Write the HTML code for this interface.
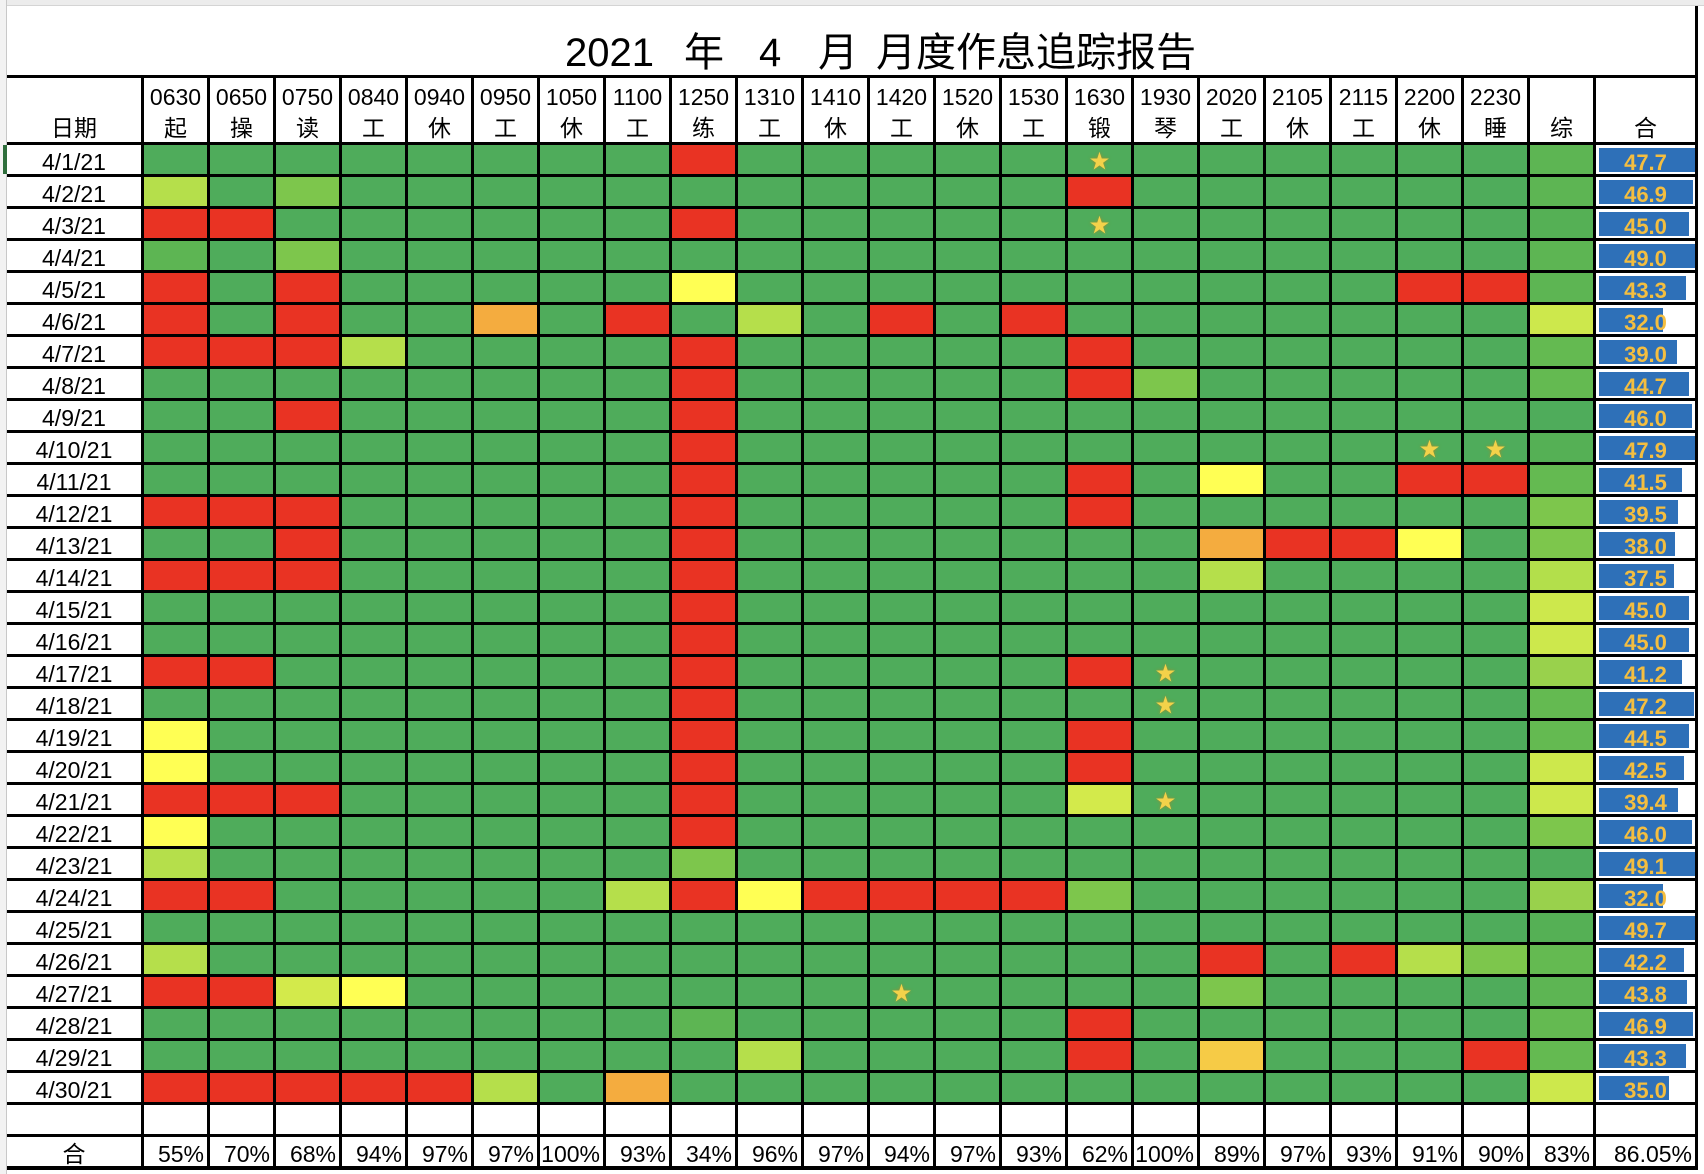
<!DOCTYPE html>
<html><head><meta charset="utf-8">
<style>
*{margin:0;padding:0;box-sizing:border-box}
html,body{width:1704px;height:1174px;overflow:hidden;background:#fff;font-family:"Liberation Sans","Noto Sans CJK SC",sans-serif;color:#000}
.topstrip{position:absolute;left:0;top:0;width:1704px;height:6px;background:#ececec;border-bottom:1px solid #d4d4d4}
.leftstrip{position:absolute;left:0;top:0;width:7px;height:1174px;background:#f2f2f2;border-right:1px solid #c8c8c8}
.sel{position:absolute;left:3px;top:145px;width:4px;height:29px;background:#2f6e3c}
.rb{position:absolute;left:1695px;top:6px;width:3px;height:72px;background:#000}
.ti{position:absolute;top:30px;font-size:40px;line-height:46px;white-space:nowrap;font-family:"Liberation Sans","Noto Sans CJK SC",sans-serif}
.t{position:absolute;left:7px;top:75px;display:grid;background:#000;padding:3px 3px 4px 0;gap:3px;
grid-template-columns:134px repeat(22,63px) 99px;grid-template-rows:64px repeat(32,29px)}
.t>div,.t>i,.t>b{display:block;font-style:normal;font-weight:normal;overflow:hidden}
.t>div{background:#fff;font-size:23px;text-align:center;line-height:35px}
.t>div.h{line-height:31px;padding-top:4px;font-size:23px}
.t>div.hd{line-height:31px;padding-top:35px;font-size:23px}
.t>div.p{text-align:right;padding-right:3px;font-size:23px;line-height:35px}
.t>i{background:#4FAC5B;text-align:center;color:#F3D24A;font-size:20px;line-height:34px;text-shadow:0 0 3px #a88a2a}
.r{background:#E93323!important}.y{background:#FFFF54!important}.l{background:#B5DF4B!important}
.m{background:#7DC64C!important}.o{background:#F4AC3F!important}.go{background:#F6CB46!important}
.ly{background:#D3EA4B!important}.m2{background:#5DB553!important}
.z1{background:#5DB553!important}.z2{background:#55B055!important}.z3{background:#CDE84C!important}
.z4{background:#64BA51!important}.z5{background:#7DC64C!important}.z6{background:#B3DF4B!important}
.z7{background:#99D14C!important}.z8{background:#4FAC5B!important}
.t>b{background:#fff;position:relative}
.t>b s{position:absolute;left:3px;top:3px;height:24px;background:#2E70B8;text-decoration:none}
.t>b u{position:absolute;left:0;right:0;top:0;text-align:center;text-decoration:none;color:#F4BE40;font-weight:bold;font-size:22px;line-height:36px}
</style></head><body>
<div class="topstrip"></div>
<div class="leftstrip"></div>
<div class="sel"></div>
<div class="rb"></div>
<div class="ti" style="left:565px">2021</div>
<div class="ti" style="left:684px">年</div>
<div class="ti" style="left:759px">4</div>
<div class="ti" style="left:818px">月</div>
<div class="ti" style="left:876px">月度作息追踪报告</div>
<div class="t">
<div class="hd">日期</div><div class="h">0630<br>起</div><div class="h">0650<br>操</div><div class="h">0750<br>读</div><div class="h">0840<br>工</div><div class="h">0940<br>休</div><div class="h">0950<br>工</div><div class="h">1050<br>休</div><div class="h">1100<br>工</div><div class="h">1250<br>练</div><div class="h">1310<br>工</div><div class="h">1410<br>休</div><div class="h">1420<br>工</div><div class="h">1520<br>休</div><div class="h">1530<br>工</div><div class="h">1630<br>锻</div><div class="h">1930<br>琴</div><div class="h">2020<br>工</div><div class="h">2105<br>休</div><div class="h">2115<br>工</div><div class="h">2200<br>休</div><div class="h">2230<br>睡</div><div class="hd">综</div><div class="hd">合</div>

<div>4/1/21</div><i></i><i></i><i></i><i></i><i></i><i></i><i></i><i></i><i class=r></i><i></i><i></i><i></i><i></i><i></i><i>★</i><i></i><i></i><i></i><i></i><i></i><i></i><i class=z1></i><b><s style="width:96px"></s><u>47.7</u></b>
<div>4/2/21</div><i class=l></i><i></i><i class=m></i><i></i><i></i><i></i><i></i><i></i><i></i><i></i><i></i><i></i><i></i><i></i><i class=r></i><i></i><i></i><i></i><i></i><i></i><i></i><i class=z1></i><b><s style="width:94px"></s><u>46.9</u></b>
<div>4/3/21</div><i class=r></i><i class=r></i><i></i><i></i><i></i><i></i><i></i><i></i><i class=r></i><i></i><i></i><i></i><i></i><i></i><i>★</i><i></i><i></i><i></i><i></i><i></i><i></i><i class=z2></i><b><s style="width:90px"></s><u>45.0</u></b>
<div>4/4/21</div><i class=m2></i><i></i><i class=m></i><i></i><i></i><i></i><i></i><i></i><i></i><i></i><i></i><i></i><i></i><i></i><i></i><i></i><i></i><i></i><i></i><i></i><i></i><i class=z1></i><b><s style="width:99px"></s><u>49.0</u></b>
<div>4/5/21</div><i class=r></i><i></i><i class=r></i><i></i><i></i><i></i><i></i><i></i><i class=y></i><i></i><i></i><i></i><i></i><i></i><i></i><i></i><i></i><i></i><i></i><i class=r></i><i class=r></i><i class=z1></i><b><s style="width:87px"></s><u>43.3</u></b>
<div>4/6/21</div><i class=r></i><i></i><i class=r></i><i></i><i></i><i class=o></i><i></i><i class=r></i><i></i><i class=l></i><i></i><i class=r></i><i></i><i class=r></i><i></i><i></i><i></i><i></i><i></i><i></i><i></i><i class=z3></i><b><s style="width:64px"></s><u>32.0</u></b>
<div>4/7/21</div><i class=r></i><i class=r></i><i class=r></i><i class=l></i><i></i><i></i><i></i><i></i><i class=r></i><i></i><i></i><i></i><i></i><i></i><i class=r></i><i></i><i></i><i></i><i></i><i></i><i></i><i class=z4></i><b><s style="width:78px"></s><u>39.0</u></b>
<div>4/8/21</div><i></i><i></i><i></i><i></i><i></i><i></i><i></i><i></i><i class=r></i><i></i><i></i><i></i><i></i><i></i><i class=r></i><i class=m></i><i></i><i></i><i></i><i></i><i></i><i class=z4></i><b><s style="width:90px"></s><u>44.7</u></b>
<div>4/9/21</div><i></i><i></i><i class=r></i><i></i><i></i><i></i><i></i><i></i><i class=r></i><i></i><i></i><i></i><i></i><i></i><i></i><i></i><i></i><i></i><i></i><i></i><i></i><i class=z8></i><b><s style="width:93px"></s><u>46.0</u></b>
<div>4/10/21</div><i></i><i></i><i></i><i></i><i></i><i></i><i></i><i></i><i class=r></i><i></i><i></i><i></i><i></i><i></i><i></i><i></i><i></i><i></i><i></i><i>★</i><i>★</i><i class=z2></i><b><s style="width:96px"></s><u>47.9</u></b>
<div>4/11/21</div><i></i><i></i><i></i><i></i><i></i><i></i><i></i><i></i><i class=r></i><i></i><i></i><i></i><i></i><i></i><i class=r></i><i></i><i class=y></i><i></i><i></i><i class=r></i><i class=r></i><i class=z4></i><b><s style="width:83px"></s><u>41.5</u></b>
<div>4/12/21</div><i class=r></i><i class=r></i><i class=r></i><i></i><i></i><i></i><i></i><i></i><i class=r></i><i></i><i></i><i></i><i></i><i></i><i class=r></i><i></i><i></i><i></i><i></i><i></i><i></i><i class=z5></i><b><s style="width:79px"></s><u>39.5</u></b>
<div>4/13/21</div><i></i><i></i><i class=r></i><i></i><i></i><i></i><i></i><i></i><i class=r></i><i></i><i></i><i></i><i></i><i></i><i></i><i></i><i class=o></i><i class=r></i><i class=r></i><i class=y></i><i></i><i class=z5></i><b><s style="width:76px"></s><u>38.0</u></b>
<div>4/14/21</div><i class=r></i><i class=r></i><i class=r></i><i></i><i></i><i></i><i></i><i></i><i class=r></i><i></i><i></i><i></i><i></i><i></i><i></i><i></i><i class=l></i><i></i><i></i><i></i><i></i><i class=z6></i><b><s style="width:75px"></s><u>37.5</u></b>
<div>4/15/21</div><i></i><i></i><i></i><i></i><i></i><i></i><i></i><i></i><i class=r></i><i></i><i></i><i></i><i></i><i></i><i></i><i></i><i></i><i></i><i></i><i></i><i></i><i class=z3></i><b><s style="width:90px"></s><u>45.0</u></b>
<div>4/16/21</div><i></i><i></i><i></i><i></i><i></i><i></i><i></i><i></i><i class=r></i><i></i><i></i><i></i><i></i><i></i><i></i><i></i><i></i><i></i><i></i><i></i><i></i><i class=z3></i><b><s style="width:90px"></s><u>45.0</u></b>
<div>4/17/21</div><i class=r></i><i class=r></i><i></i><i></i><i></i><i></i><i></i><i></i><i class=r></i><i></i><i></i><i></i><i></i><i></i><i class=r></i><i>★</i><i></i><i></i><i></i><i></i><i></i><i class=z7></i><b><s style="width:83px"></s><u>41.2</u></b>
<div>4/18/21</div><i></i><i></i><i></i><i></i><i></i><i></i><i></i><i></i><i class=r></i><i></i><i></i><i></i><i></i><i></i><i></i><i>★</i><i></i><i></i><i></i><i></i><i></i><i class=z4></i><b><s style="width:95px"></s><u>47.2</u></b>
<div>4/19/21</div><i class=y></i><i></i><i></i><i></i><i></i><i></i><i></i><i></i><i class=r></i><i></i><i></i><i></i><i></i><i></i><i class=r></i><i></i><i></i><i></i><i></i><i></i><i></i><i class=z4></i><b><s style="width:90px"></s><u>44.5</u></b>
<div>4/20/21</div><i class=y></i><i></i><i></i><i></i><i></i><i></i><i></i><i></i><i class=r></i><i></i><i></i><i></i><i></i><i></i><i class=r></i><i></i><i></i><i></i><i></i><i></i><i></i><i class=z3></i><b><s style="width:85px"></s><u>42.5</u></b>
<div>4/21/21</div><i class=r></i><i class=r></i><i class=r></i><i></i><i></i><i></i><i></i><i></i><i class=r></i><i></i><i></i><i></i><i></i><i></i><i class=ly></i><i>★</i><i></i><i></i><i></i><i></i><i></i><i class=z3></i><b><s style="width:79px"></s><u>39.4</u></b>
<div>4/22/21</div><i class=y></i><i></i><i></i><i></i><i></i><i></i><i></i><i></i><i class=r></i><i></i><i></i><i></i><i></i><i></i><i></i><i></i><i></i><i></i><i></i><i></i><i></i><i class=z5></i><b><s style="width:93px"></s><u>46.0</u></b>
<div>4/23/21</div><i class=l></i><i></i><i></i><i></i><i></i><i></i><i></i><i></i><i class=m></i><i></i><i></i><i></i><i></i><i></i><i></i><i></i><i></i><i></i><i></i><i></i><i></i><i class=z8></i><b><s style="width:99px"></s><u>49.1</u></b>
<div>4/24/21</div><i class=r></i><i class=r></i><i></i><i></i><i></i><i></i><i></i><i class=l></i><i class=r></i><i class=y></i><i class=r></i><i class=r></i><i class=r></i><i class=r></i><i class=m></i><i></i><i></i><i></i><i></i><i></i><i></i><i class=z7></i><b><s style="width:64px"></s><u>32.0</u></b>
<div>4/25/21</div><i></i><i></i><i></i><i></i><i></i><i></i><i></i><i></i><i></i><i></i><i></i><i></i><i></i><i></i><i></i><i></i><i></i><i></i><i></i><i></i><i></i><i class=z2></i><b><s style="width:100px"></s><u>49.7</u></b>
<div>4/26/21</div><i class=l></i><i></i><i></i><i></i><i></i><i></i><i></i><i></i><i></i><i></i><i></i><i></i><i></i><i></i><i></i><i></i><i class=r></i><i></i><i class=r></i><i class=l></i><i class=m></i><i class=z4></i><b><s style="width:85px"></s><u>42.2</u></b>
<div>4/27/21</div><i class=r></i><i class=r></i><i class=ly></i><i class=y></i><i></i><i></i><i></i><i></i><i></i><i></i><i></i><i>★</i><i></i><i></i><i></i><i></i><i class=m></i><i></i><i></i><i></i><i></i><i class=z1></i><b><s style="width:88px"></s><u>43.8</u></b>
<div>4/28/21</div><i></i><i></i><i></i><i></i><i></i><i></i><i></i><i></i><i class=m2></i><i></i><i></i><i></i><i></i><i></i><i class=r></i><i></i><i></i><i></i><i></i><i></i><i></i><i class=z4></i><b><s style="width:94px"></s><u>46.9</u></b>
<div>4/29/21</div><i></i><i></i><i></i><i></i><i></i><i></i><i></i><i></i><i></i><i class=l></i><i></i><i></i><i></i><i></i><i class=r></i><i></i><i class=go></i><i></i><i></i><i></i><i class=r></i><i class=z4></i><b><s style="width:87px"></s><u>43.3</u></b>
<div>4/30/21</div><i class=r></i><i class=r></i><i class=r></i><i class=r></i><i class=r></i><i class=l></i><i></i><i class=o></i><i></i><i></i><i></i><i></i><i></i><i></i><i></i><i></i><i></i><i></i><i></i><i></i><i></i><i class=z3></i><b><s style="width:70px"></s><u>35.0</u></b>

<div></div><div></div><div></div><div></div><div></div><div></div><div></div><div></div><div></div><div></div><div></div><div></div><div></div><div></div><div></div><div></div><div></div><div></div><div></div><div></div><div></div><div></div><div></div><div></div>
<div>合</div><div class=p>55%</div><div class=p>70%</div><div class=p>68%</div><div class=p>94%</div><div class=p>97%</div><div class=p>97%</div><div class=p>100%</div><div class=p>93%</div><div class=p>34%</div><div class=p>96%</div><div class=p>97%</div><div class=p>94%</div><div class=p>97%</div><div class=p>93%</div><div class=p>62%</div><div class=p>100%</div><div class=p>89%</div><div class=p>97%</div><div class=p>93%</div><div class=p>91%</div><div class=p>90%</div><div class=p>83%</div><div class=p>86.05%</div>
</div>
</body></html>
